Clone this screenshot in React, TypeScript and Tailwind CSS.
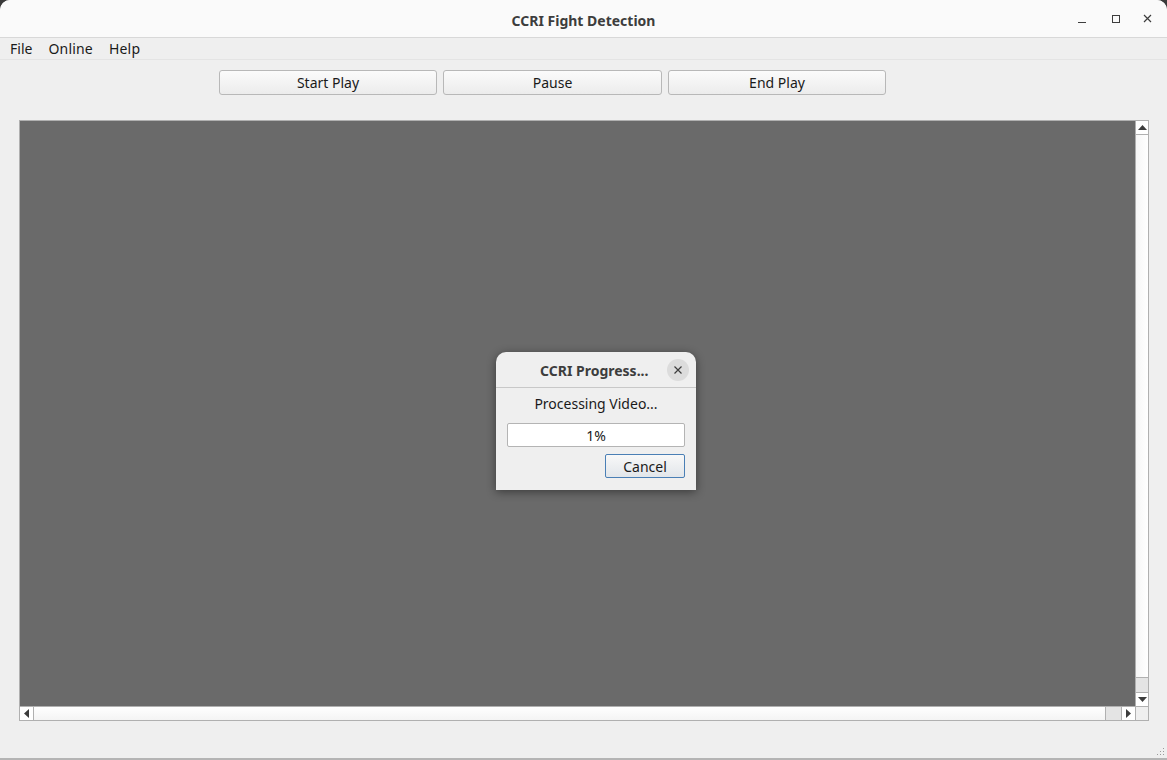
import React from 'react';

const font = { fontFamily: '"Noto Sans", "Open Sans", sans-serif' };

function ArrowUp() {
  return (
    <svg width="9" height="5" viewBox="0 0 9 5"><path d="M0 5 L4.5 0 L9 5 Z" fill="#3c3c3c" /></svg>
  );
}
function ArrowDown() {
  return (
    <svg width="9" height="5" viewBox="0 0 9 5"><path d="M0 0 L4.5 5 L9 0 Z" fill="#3c3c3c" /></svg>
  );
}
function ArrowLeft() {
  return (
    <svg width="5" height="9" viewBox="0 0 5 9"><path d="M5 0 L0 4.5 L5 9 Z" fill="#3c3c3c" /></svg>
  );
}
function ArrowRight() {
  return (
    <svg width="5" height="9" viewBox="0 0 5 9"><path d="M0 0 L5 4.5 L0 9 Z" fill="#3c3c3c" /></svg>
  );
}

export default function App() {
  return (
    <div className="w-[1167px] h-[760px] bg-[#3a3a3a] overflow-hidden" style={font}>
      <div className="relative w-full h-[758px] bg-[#efefef] rounded-t-[10px] overflow-hidden flex flex-col">
        {/* Title bar */}
        <div className="relative h-[38px] shrink-0 bg-[#fafafa] border-b border-[#d8d8d8] flex items-center justify-center">
          <span className="text-[14px] font-bold text-[#3d3d3d] mt-[3px]">CCRI Fight Detection</span>
          <div className="absolute right-0 top-0 h-full flex items-center">
            <div className="w-[34px] flex justify-center pt-[3px]">
              <div className="w-[8px] h-[1px] bg-[#3d3d3d] mt-[5px]" />
            </div>
            <div className="w-[34px] flex justify-center">
              <div className="w-[8px] h-[8px] border border-[#3d3d3d]" />
            </div>
            <div className="w-[34px] flex justify-center pr-[6px]">
              <svg width="9" height="9" viewBox="0 0 9 9">
                <path d="M1 1 L8 8 M8 1 L1 8" stroke="#3d3d3d" strokeWidth="1.2" />
              </svg>
            </div>
          </div>
        </div>

        {/* Menu bar */}
        <div className="h-[22px] shrink-0 flex items-center gap-[16px] pl-[10px] text-[14px] text-[#1a1a1a] border-b border-[#e4e4e4]">
          <span>File</span>
          <span className="tracking-[0.2px]">Online</span>
          <span className="tracking-[0.2px]">Help</span>
        </div>

        {/* Buttons */}
        <div className="flex gap-[6px] pl-[219px] pt-[10px] shrink-0">
          {[
            { label: 'Start Play', w: 'w-[218px]' },
            { label: 'Pause', w: 'w-[219px]' },
            { label: 'End Play', w: 'w-[218px]' },
          ].map(b => (
            <button
              key={b.label}
              className={`${b.w} h-[25px] rounded-[3px] border border-[#b8b8b8] bg-gradient-to-b from-[#fbfbfb] to-[#ececec] text-[14px] text-[#1a1a1a] flex items-center justify-center`}
            >
              {b.label}
            </button>
          ))}
        </div>

        {/* Scroll area */}
        <div className="ml-[19px] mt-[25px] w-[1130px] h-[601px] border border-[#b0b0b0] flex flex-col shrink-0">
          <div className="flex flex-1">
            <div className="flex-1 bg-[#6a6a6a]" />
            <div className="w-[13px] flex flex-col border-l border-[#b0b0b0]">
              <div className="h-[14px] bg-white border-b border-[#b0b0b0] flex items-center justify-center"><ArrowUp /></div>
              <div className="flex-1 bg-gradient-to-r from-[#f6f6f6] to-white" />
              <div className="h-[15px] bg-[#e4e4e4] border-t border-[#b0b0b0]" />
              <div className="h-[14px] bg-white border-t border-[#b0b0b0] flex items-center justify-center"><ArrowDown /></div>
            </div>
          </div>
          <div className="h-[14px] flex border-t border-[#b0b0b0]">
            <div className="w-[14px] bg-white border-r border-[#b0b0b0] flex items-center justify-center"><ArrowLeft /></div>
            <div className="flex-1 bg-gradient-to-b from-white to-[#f4f4f4]" />
            <div className="w-[16px] bg-[#e4e4e4] border-l border-[#b0b0b0]" />
            <div className="w-[14px] bg-white border-l border-[#b0b0b0] flex items-center justify-center"><ArrowRight /></div>
            <div className="w-[13px] bg-[#efefef] border-l border-[#b0b0b0]" />
          </div>
        </div>

        {/* Resize grip */}
        <div className="absolute right-[3px] bottom-[3px] grid grid-cols-3 gap-[2px]">
          {[0, 0, 1, 0, 1, 1, 1, 1, 1].map((v, i) => (
            <div key={i} className={v ? 'w-[1px] h-[1px] bg-[#9a9a9a]' : 'w-[1px] h-[1px]'} />
          ))}
        </div>

        {/* Progress dialog */}
        <div className="absolute left-[496px] top-[352px] w-[200px] h-[138px] rounded-t-[10px] bg-[#efefef] shadow-[0_2px_10px_rgba(0,0,0,0.45)] flex flex-col">
          <div className="h-[36px] border-b border-[#c8c8c8] flex items-center relative">
            <span className="ml-[44px] mt-[2px] text-[14px] font-bold text-[#3d3d3d]">CCRI Progress...</span>
            <div className="absolute right-[7px] top-[7px] w-[22px] h-[22px] rounded-full bg-[#dcdcdc] flex items-center justify-center">
              <svg width="8" height="8" viewBox="0 0 8 8">
                <path d="M0.5 0.5 L7.5 7.5 M7.5 0.5 L0.5 7.5" stroke="#3d3d3d" strokeWidth="1.2" />
              </svg>
            </div>
          </div>
          <div className="text-center text-[14px] text-[#1a1a1a] mt-[7px] leading-[18px]">Processing Video...</div>
          <div className="mx-[11px] mt-[10px] h-[24px] bg-white border border-[#b4b4b4] rounded-[2px] flex items-center justify-center text-[14px] text-[#1a1a1a]">
            1%
          </div>
          <div className="flex justify-end mr-[11px] mt-[7px]">
            <button className="w-[80px] h-[24px] rounded-[2px] border border-[#4a7fb5] bg-gradient-to-b from-[#f8f8f8] to-[#e2e6ea] text-[14px] text-[#1a1a1a] flex items-center justify-center">
              Cancel
            </button>
          </div>
        </div>
      </div>
      <div className="h-[2px] bg-[#b4b4b4]" />
    </div>
  );
}
